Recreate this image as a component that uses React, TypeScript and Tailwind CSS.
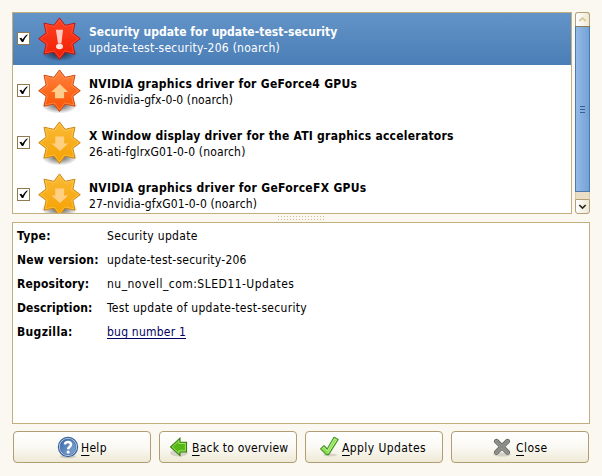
import React from "react";

type Level = "security" | "recommended" | "optional";

const palette: Record<Level, { top: string; bottom: string; edge: string; glow: string; mark: string }> = {
  security: { top: "#ff4426", bottom: "#f01c00", edge: "#b8171a", glow: "#ff7155", mark: "#ffc9bf" },
  recommended: { top: "#ff8440", bottom: "#fb5000", edge: "#cf4a12", glow: "#ffb078", mark: "#ffcc8c" },
  optional: { top: "#fabb38", bottom: "#f5a000", edge: "#c98718", glow: "#ffdc70", mark: "#ffcf82" },
};

const STAR =
  "M0 -20.8L5.6 -13.4L15.5 -15.5L13.4 -5.6L20.8 0L13.4 5.6L15.5 15.5L5.6 13.4L0 20.8L-5.6 13.4L-15.5 15.5L-13.4 5.6L-20.8 0L-13.4 -5.6L-15.5 -15.5L-5.6 -13.4Z";

function StarIcon({ level }: { level: Level }) {
  const c = palette[level];
  return (
    <svg width="44" height="50" viewBox="0 0 44 50" className="block shrink-0">
      <defs>
        <linearGradient id={"fill-" + level} x1="0" y1="0" x2="0" y2="1">
          <stop offset="0" stopColor={c.top} />
          <stop offset="1" stopColor={c.bottom} />
        </linearGradient>
        <radialGradient id={"shade-" + level}>
          <stop offset="0.3" stopColor="#000" stopOpacity="0.5" />
          <stop offset="1" stopColor="#000" stopOpacity="0" />
        </radialGradient>
      </defs>
      <ellipse cx="22.5" cy="38" rx="18" ry="8.5" fill={"url(#shade-" + level + ")"} />
      <g transform="translate(22.5 23.7)">
        <path d={STAR} fill={"url(#fill-" + level + ")"} stroke={c.edge} strokeWidth="1" />
        <path d={STAR} transform="scale(0.91)" fill="none" stroke={c.glow} strokeWidth="0.9" opacity="0.55" />
      </g>
      <g transform="translate(0.8 0.6)">
        {level === "security" && (
          <g fill={c.mark}>
            <path d="M18.1 14.2H25.2L23.6 27.8H20.2Z" />
            <ellipse cx="21.7" cy="30.9" rx="3.5" ry="2.7" fill="#ffe3de" />
          </g>
        )}
        {level === "recommended" && <path d="M22 16.5L30.3 24.5H26.3V30.6H17.2V24.5H13.4Z" fill={c.mark} />}
        {level === "optional" && <path d="M17.5 16.8H26.3V24H30.3L22.2 31.5L13.7 24H17.5Z" fill={c.mark} />}
      </g>
    </svg>
  );
}

function CheckBox() {
  return (
    <div className="mb-px flex h-[13px] w-[13px] shrink-0 items-center justify-center border border-[#8f7b50] bg-white">
      <svg width="11" height="11" viewBox="0 0 11 11" className="block">
        <path d="M1.4 5.3L3.4 4.7L4.5 6.5Q6.2 3 9.3 1.3L9.6 2Q6.6 5 5.2 9H3.9Z" fill="#000" />
      </svg>
    </div>
  );
}

const updates: { level: Level; title: string; pkg: string; titleTrack: string; pkgTrack: string }[] = [
  {
    level: "security",
    title: "Security update for update-test-security",
    pkg: "update-test-security-206 (noarch)",
    titleTrack: "tracking-[0.03px]",
    pkgTrack: "tracking-[0.25px]",
  },
  {
    level: "recommended",
    title: "NVIDIA graphics driver for GeForce4 GPUs",
    pkg: "26-nvidia-gfx-0-0 (noarch)",
    titleTrack: "tracking-[0.29px]",
    pkgTrack: "tracking-[0.09px]",
  },
  {
    level: "optional",
    title: "X Window display driver for the ATI graphics accelerators",
    pkg: "26-ati-fglrxG01-0-0 (noarch)",
    titleTrack: "tracking-[0.25px]",
    pkgTrack: "tracking-[0.16px]",
  },
  {
    level: "optional",
    title: "NVIDIA graphics driver for GeForceFX GPUs",
    pkg: "27-nvidia-gfxG01-0-0 (noarch)",
    titleTrack: "tracking-[0.31px]",
    pkgTrack: "tracking-[0.15px]",
  },
];

const details = [
  { name: "Type:", value: "Security update", nameTrack: "tracking-[0.3px]", valueTrack: "tracking-[0.33px]" },
  { name: "New version:", value: "update-test-security-206", nameTrack: "tracking-[0.2px]", valueTrack: "tracking-[0.24px]" },
  { name: "Repository:", value: "nu_novell_com:SLED11-Updates", nameTrack: "tracking-[0.2px]", valueTrack: "tracking-[0.48px]" },
  { name: "Description:", value: "Test update of update-test-security", nameTrack: "tracking-[0.1px]", valueTrack: "tracking-[0.3px]" },
  { name: "Bugzilla:", value: "bug number 1", nameTrack: "tracking-[0.35px]", valueTrack: "tracking-[0.22px] text-[#00005e] underline underline-offset-2" },
];

function ScrollBar() {
  return (
    <div className="flex h-[202px] w-[15px] shrink-0 flex-col">
      <div className="flex h-[14px] items-center justify-center rounded-t-[3px] border border-b-0 border-[#b5a076] bg-linear-to-r from-white to-[#efe8d5]">
        <svg width="9" height="7" viewBox="0 0 9 7"><path d="M1.3 5L4.5 2L7.7 5" fill="none" stroke="#dcc99c" strokeWidth="1.8" /></svg>
      </div>
      <div className="flex h-[166px] flex-col items-center justify-center gap-[2px] border border-t-[#8d7a57] border-[#4d79ad] bg-linear-to-r from-[#94bae6] to-[#74a2d7]">
        <div className="h-px w-[5px] bg-[#365f91]" />
        <div className="h-px w-[5px] bg-[#365f91]" />
        <div className="h-px w-[5px] bg-[#365f91]" />
      </div>
      <div className="h-[7px] border-x border-[#d9c9a3] bg-[#eadfc6]" />
      <div className="flex h-[15px] items-center justify-center rounded-b-[3px] border border-[#b5a076] bg-linear-to-r from-white to-[#efe8d5]">
        <svg width="9" height="7" viewBox="0 0 9 7"><path d="M1.3 2L4.5 5L7.7 2" fill="none" stroke="#2c2922" strokeWidth="1.7" /></svg>
      </div>
    </div>
  );
}

function HelpIcon() {
  return (
    <svg width="22" height="24" viewBox="0 0 22 24" className="block">
      <defs>
        <linearGradient id="help" x1="0" y1="0" x2="1" y2="1">
          <stop offset="0" stopColor="#3564a5" />
          <stop offset="1" stopColor="#8badd7" />
        </linearGradient>
      </defs>
      <ellipse cx="11" cy="21.3" rx="8" ry="2" fill="#000" opacity="0.15" />
      <circle cx="11" cy="12" r="9.6" fill="#e9f0fa" stroke="#3864a0" strokeWidth="1.2" />
      <circle cx="11" cy="12" r="8" fill="url(#help)" stroke="#3c67a3" strokeWidth="0.7" />
      <path d="M8 9.5C8.2 6.2 14.3 6.2 14 9.7C13.8 11.7 11.2 11.7 11.2 14.2" fill="none" stroke="#fff" strokeWidth="2.6" />
      <circle cx="11.1" cy="17" r="1.5" fill="#fff" />
    </svg>
  );
}

function BackIcon() {
  return (
    <svg width="22" height="24" viewBox="0 0 22 24" className="block">
      <ellipse cx="11" cy="18" rx="9" ry="3.5" fill="#000" opacity="0.13" />
      <path d="M2.6 12L12 3.2V7.3H18.5V17H12V20.6Z" fill="#55b814" stroke="#357e12" strokeWidth="1.1" />
      <path d="M4.2 12L10.9 5.7V8.5H17.4V15.8H10.9V18.2Z" fill="none" stroke="#a0e265" strokeWidth="1" />
    </svg>
  );
}

function ApplyIcon() {
  return (
    <svg width="22" height="24" viewBox="0 0 22 24" className="block">
      <ellipse cx="12" cy="20" rx="7" ry="1.5" fill="#000" opacity="0.12" />
      <path d="M2.6 13.8L6 10.7L9.2 14L16 2.3L20.2 4.4L10.6 19.6H8.4Z" fill="#8ae04f" stroke="#45902a" strokeWidth="1.1" strokeLinejoin="round" />
      <path d="M4.3 13.8L5.9 12.3L9.4 15.8L16.4 3.9L18.6 4.9L10 18.2" fill="none" stroke="#c1f59a" strokeWidth="0.9" />
    </svg>
  );
}

function CloseIcon() {
  return (
    <svg width="22" height="24" viewBox="0 0 22 24" className="block">
      <ellipse cx="10" cy="19.5" rx="9" ry="2" fill="#000" opacity="0.13" />
      <path d="M4.5 6.3L15.5 17.3M15.5 6.3L4.5 17.3" stroke="#666963" strokeWidth="5" strokeLinecap="round" />
      <path d="M4.5 6.3L15.5 17.3M15.5 6.3L4.5 17.3" stroke="#9b9e98" strokeWidth="3.1" strokeLinecap="round" />
      <path d="M4.5 6.3L15.5 17.3M15.5 6.3L4.5 17.3" stroke="#868983" strokeWidth="1.6" strokeLinecap="round" />
    </svg>
  );
}

function Button({ icon, label, look }: { icon: React.ReactNode; label: string; look: string }) {
  return (
    <button
      className={
        "flex h-8 w-[138px] items-center rounded-[4px] border border-[#b19d72] bg-linear-to-b from-white via-[#faf9f4] to-[#efe9d6] text-black " + look
      }
    >
      {icon}
      <span className="ml-[2px] pt-px leading-4 whitespace-nowrap">
        <span className="underline underline-offset-[3px]">{label[0]}</span>
        {label.slice(1)}
      </span>
    </button>
  );
}

export default function App() {
  return (
    <div className="h-[476px] w-[602px] overflow-hidden bg-[#fbf8f1] px-3 pt-3 font-['DejaVu_Sans_Condensed','DejaVu_Sans',sans-serif] text-[12px] text-black">
      <div className="flex gap-[3px]">
        <div className="h-[202px] w-[560px] overflow-hidden border border-[#c4ae7e] bg-white">
          {updates.map((u, i) => (
            <div
              key={u.title}
              className={
                "flex h-[52px] items-center pl-[4px] " +
                (i === 0 ? "bg-linear-to-b from-[#6394c8] to-[#4a7eb6] text-white" : "")
              }
            >
              <CheckBox />
              <div className="ml-[7px] h-12">
                <StarIcon level={u.level} />
              </div>
              <div className="ml-[8px] pt-[1px] leading-4 whitespace-nowrap">
                <div className={"font-bold " + u.titleTrack}>{u.title}</div>
                <div className={u.pkgTrack}>{u.pkg}</div>
              </div>
            </div>
          ))}
        </div>
        <ScrollBar />
      </div>

      <div className="flex h-2 w-[578px] flex-col items-center justify-center gap-[2px]">
        {[0, 1].map((r) => (
          <div key={r} className="flex gap-[2px]">
            {Array.from({ length: 16 }, (_, n) => (
              <div key={n} className="h-px w-px bg-[#cdbb92]" />
            ))}
          </div>
        ))}
      </div>

      <div className="h-[202px] w-[578px] border border-[#c4ae7e] bg-white pt-[1px] pl-[4px]">
        {details.map((d) => (
          <div key={d.name} className="flex h-6 items-center whitespace-nowrap">
            <div className={"w-[90px] font-bold " + d.nameTrack}>{d.name}</div>
            <div className={d.valueTrack}>{d.value}</div>
          </div>
        ))}
      </div>

      <div className="mt-[7px] ml-[1px] flex gap-2">
        <Button icon={<HelpIcon />} label="Help" look="pl-[43px] tracking-[0.3px]" />
        <Button icon={<BackIcon />} label="Back to overview" look="pl-[8px] tracking-[0.22px]" />
        <Button icon={<ApplyIcon />} label="Apply Updates" look="pl-[12px] tracking-[0.42px]" />
        <Button icon={<CloseIcon />} label="Close" look="pl-[40px] tracking-[0.45px]" />
      </div>
    </div>
  );
}
